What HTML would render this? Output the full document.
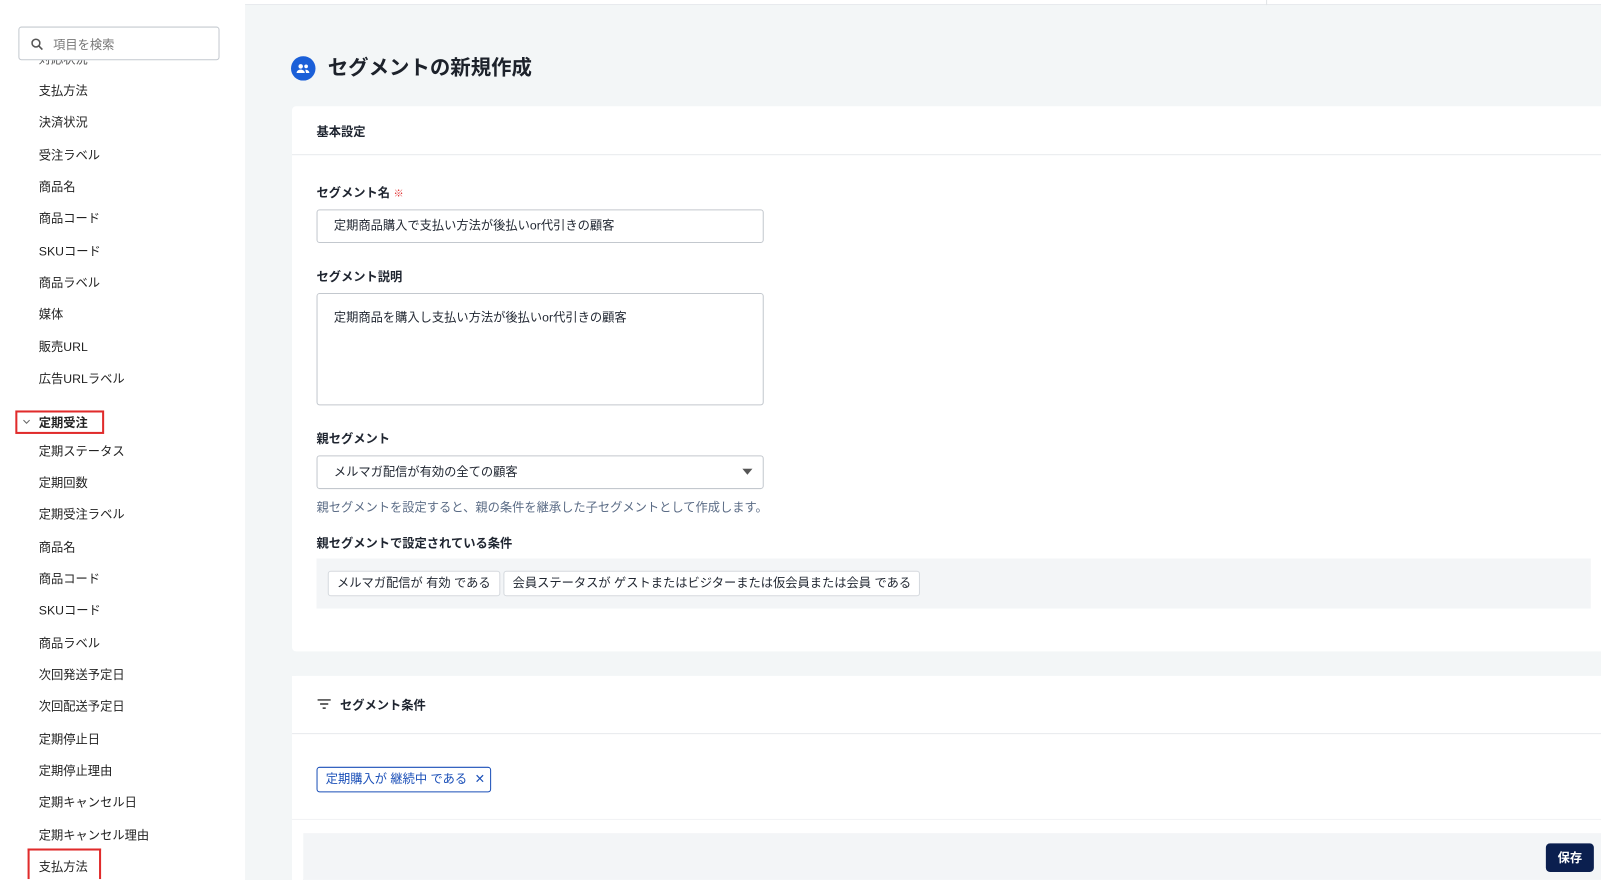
<!DOCTYPE html>
<html><head><meta charset="utf-8"><style>
*{box-sizing:border-box;margin:0;padding:0}
html,body{width:1601px;height:880px;overflow:hidden;background:#f3f6f7}
body{font-family:"Liberation Sans","Noto Sans CJK JP",sans-serif;color:#1f2530;font-size:13px;position:relative}
#w{position:absolute;left:0;top:0;width:1568px;height:861px;overflow:hidden;transform:scale(1.02105);transform-origin:0 0}
.abs{position:absolute}
.side{left:0;top:0;width:240px;height:861px;background:#fff}
.topline{left:0;top:0;width:1568px;height:5px;background:#fff;border-bottom:1px solid #e6e9ec}
.si{position:absolute;left:38px;font-size:12px;line-height:16px;color:#222}
.search{left:18px;top:26px;width:197px;height:33px;border:1px solid #c4c9cf;border-radius:3px;background:#fff}
.card{background:#fff;left:286px;right:0;border-radius:4px 0 0 4px}
.lbl{position:absolute;left:24px;font-size:12px;font-weight:bold;line-height:16px}
.inp{position:absolute;left:24px;width:438px;border:1px solid #c3c8ce;border-radius:3px;background:#fff;font-size:12px;padding-left:16px}
.chip{position:absolute;top:12px;height:25px;border:1px solid #d5d9de;border-radius:3px;background:#fff;font-size:12px;line-height:23px;padding:0 8px;white-space:nowrap}
</style></head><body>
<div class="abs" style="left:0;top:0;width:245px;height:880px;background:#fff"></div>
<div class="abs" style="left:292px;right:0;top:676px;height:204px;background:#fff"></div>
<div class="abs" style="left:303px;right:0;top:833px;height:47px;background:#f3f5f7"></div>
<div id="w">
<div class="abs topline"></div>
<div class="abs" style="left:1240px;top:0;width:1px;height:5px;background:#e0e3e6"></div>
<div class="abs side">
 <div class="si" style="top:50px;color:#555;clip-path:inset(5px 0 0 0)">対応状況</div>
 <div class="si" style="top:81px">支払方法</div>
 <div class="si" style="top:112px">決済状況</div>
 <div class="si" style="top:144px">受注ラベル</div>
 <div class="si" style="top:175px">商品名</div>
 <div class="si" style="top:206px">商品コード</div>
 <div class="si" style="top:238px">SKUコード</div>
 <div class="si" style="top:269px">商品ラベル</div>
 <div class="si" style="top:300px">媒体</div>
 <div class="si" style="top:332px">販売URL</div>
 <div class="si" style="top:363px">広告URLラベル</div>
 <div class="abs" style="left:15px;top:402px;width:87px;height:23px;border:2px solid #e02b2b"></div>
 <svg class="abs" style="left:22px;top:410px" width="8" height="6" viewBox="0 0 8 6"><path d="M1 1.5l3 3 3-3" fill="none" stroke="#666" stroke-width="1"/></svg>
 <div class="si" style="top:406px;font-weight:bold">定期受注</div>
 <div class="si" style="top:434px">定期ステータス</div>
 <div class="si" style="top:465px">定期回数</div>
 <div class="si" style="top:496px">定期受注ラベル</div>
 <div class="si" style="top:528px">商品名</div>
 <div class="si" style="top:559px">商品コード</div>
 <div class="si" style="top:590px">SKUコード</div>
 <div class="si" style="top:622px">商品ラベル</div>
 <div class="si" style="top:653px">次回発送予定日</div>
 <div class="si" style="top:684px">次回配送予定日</div>
 <div class="si" style="top:716px">定期停止日</div>
 <div class="si" style="top:747px">定期停止理由</div>
 <div class="si" style="top:778px">定期キャンセル日</div>
 <div class="si" style="top:810px">定期キャンセル理由</div>
 <div class="abs" style="left:27px;top:831px;width:72px;height:30px;border:2px solid #e02b2b;border-bottom:none"></div>
 <div class="si" style="top:841px">支払方法</div>
 <div class="abs search">
  <svg class="abs" style="left:11px;top:10px" width="13" height="13" viewBox="0 0 13 13"><circle cx="5.2" cy="5.2" r="3.8" fill="none" stroke="#555" stroke-width="1.5"/><path d="M8 8l3.5 3.5" stroke="#555" stroke-width="1.6"/></svg>
  <div class="abs" style="left:33px;top:8px;font-size:12px;color:#777">項目を検索</div>
 </div>
</div>
<svg class="abs" style="left:285px;top:55px" width="24" height="24" viewBox="0 0 24 24"><circle cx="12" cy="12" r="12" fill="#1a5fd8"/><circle cx="9.5" cy="10" r="2.2" fill="#fff"/><circle cx="14.8" cy="10" r="1.8" fill="#fff"/><path d="M5.5 16.5c0-2.2 1.8-3.3 4-3.3s4 1.1 4 3.3z M14 13.3c1.9 0 4 .9 4 3.2h-3.3" fill="#fff"/></svg>
<div class="abs" style="left:321px;top:54px;font-size:20px;font-weight:bold;line-height:26px;color:#1d222b">セグメントの新規作成</div>

<div class="abs card" style="top:104px;height:534px">
 <div class="abs" style="left:24px;top:16px;font-size:12px;font-weight:bold">基本設定</div>
 <div class="abs" style="left:0;right:0;top:47px;height:1px;background:#e8eaed"></div>
 <div class="lbl" style="top:77px">セグメント名 <span style="color:#e03131;font-weight:normal;font-size:10px">※</span></div>
 <div class="inp" style="top:101px;height:33px;line-height:31px">定期商品購入で支払い方法が後払いor代引きの顧客</div>
 <div class="lbl" style="top:159px">セグメント説明</div>
 <div class="inp" style="top:183px;height:110px;padding-top:15px;line-height:16px">定期商品を購入し支払い方法が後払いor代引きの顧客</div>
 <div class="lbl" style="top:318px">親セグメント</div>
 <div class="inp" style="top:342px;height:33px;line-height:31px">メルマガ配信が有効の全ての顧客<svg style="position:absolute;right:10px;top:12px" width="10" height="7" viewBox="0 0 10 7"><path d="M0 0h10L5 6z" fill="#555"/></svg></div>
 <div class="abs" style="left:24px;top:384px;font-size:12px;color:#5b6c86">親セグメントを設定すると、親の条件を継承した子セグメントとして作成します。</div>
 <div class="lbl" style="top:420px">親セグメントで設定されている条件</div>
 <div class="abs" style="left:24px;top:443px;width:1248px;height:49px;background:#f3f5f7">
  <div class="chip" style="left:11px">メルマガ配信が 有効 である</div>
  <div class="chip" style="left:183px">会員ステータスが ゲストまたはビジターまたは仮会員または会員 である</div>
 </div>
</div>

<div class="abs card" style="top:662px;height:199px">
 <svg class="abs" style="left:25px;top:22px" width="13" height="11" viewBox="0 0 13 11"><path d="M0 1.5h13M2.5 5.5h8M5 9.5h3" stroke="#333" stroke-width="1.4"/></svg>
 <div class="abs" style="left:47px;top:20px;font-size:12px;font-weight:bold">セグメント条件</div>
 <div class="abs" style="left:0;right:0;top:56px;height:1px;background:#e8eaed"></div>
 <div class="abs" style="left:24px;top:89px;width:171px;height:25px;border:1px solid #1a4fb8;border-radius:3px;color:#1a4fb8;font-size:12px;line-height:23px;padding-left:8px;white-space:nowrap">定期購入が 継続中 である <span style="margin-left:4px">✕</span></div>
 <div class="abs" style="left:0;right:0;top:140px;height:1px;background:#f0f2f4"></div>
 <div class="abs" style="left:11px;right:0;top:154px;height:45px;background:#f3f5f7"></div>
 <div class="abs" style="left:1228px;top:164px;width:47px;height:28px;background:#0b1f4f;border-radius:4px;color:#fff;font-size:12px;font-weight:bold;text-align:center;line-height:28px">保存</div>
</div>
</div></body></html>
